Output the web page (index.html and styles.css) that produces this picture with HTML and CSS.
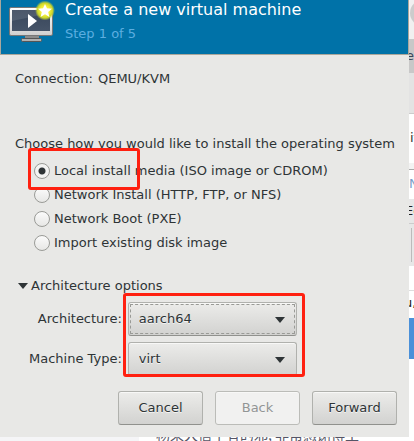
FILE: index.html
```html
<!DOCTYPE html>
<html lang="en">
<head>
<meta charset="utf-8">
<title>Create a new virtual machine</title>
<link rel="stylesheet" href="styles.css">
</head>
<body>
<main class="desktop">
  <form class="dialog">
    <header class="banner">
      <svg class="logo" viewBox="0 0 48 44" aria-hidden="true">
        <defs>
          <linearGradient id="screen" x1="0" y1="0" x2="0" y2="1"><stop offset="0" stop-color="#38465a"/><stop offset="1" stop-color="#465468"/></linearGradient>
          <linearGradient id="frame" x1="0" y1="0" x2="0" y2="1"><stop offset="0" stop-color="#fff"/><stop offset="1" stop-color="#cfcfcf"/></linearGradient>
          <radialGradient id="glow"><stop offset="0.45" stop-color="#f6f03a"/><stop offset="0.75" stop-color="#c9d52b"/><stop offset="1" stop-color="#c9d52b" stop-opacity="0"/></radialGradient>
        </defs>
        <path d="M18 34h14v5H18z" fill="#8c8c8c"/>
        <rect x="14.500" y="37.500" width="20" height="3" rx="1" fill="#b0b0b0" stroke="#555"/>
        <rect x="2.500" y="6.500" width="43" height="28" rx="1.500" fill="url(#frame)" stroke="#777"/>
        <rect x="5" y="9" width="38" height="21" fill="url(#screen)"/>
        <path d="M5 9h38v3L5 20z" fill="#fff" opacity=".1"/>
        <path d="M21 13l9 7-9 7z" fill="#fff"/>
        <circle cx="38" cy="9.500" r="10" fill="url(#glow)"/>
        <path d="M38 3l2 4.300 5 .4-3.800 3.300 1.200 5-4.400-2.700-4.400 2.700 1.200-5L31 7.700l5-.4z" fill="#fff"/>
      </svg>
      <div>
        <h1 class="title">Create a new virtual machine</h1>
        <p class="step">Step 1 of 5</p>
      </div>
    </header>
    <div class="content">
      <p class="connection"><span>Connection:</span><span>QEMU/KVM</span></p>
      <fieldset class="methods">
        <legend>Choose how you would like to install the operating system</legend>
        <div class="method marked">
          <input type="radio" name="method" id="local" checked>
          <label for="local">Local install media (ISO image or CDROM)</label>
        </div>
        <div class="method">
          <input type="radio" name="method" id="network">
          <label for="network">Network Install (HTTP, FTP, or NFS)</label>
        </div>
        <div class="method">
          <input type="radio" name="method" id="pxe">
          <label for="pxe">Network Boot (PXE)</label>
        </div>
        <div class="method">
          <input type="radio" name="method" id="import">
          <label for="import">Import existing disk image</label>
        </div>
      </fieldset>
      <details class="options" open>
        <summary><svg class="arrow" viewBox="0 0 10 6" aria-hidden="true"><path d="M0 0h10L5 6z"/></svg>Architecture options</summary>
        <div class="option-grid">
          <div class="labels">
            <label for="arch">Architecture:</label>
            <label for="machine">Machine Type:</label>
          </div>
          <div class="selects">
            <div class="select focused"><select id="arch"><option>aarch64</option></select><svg class="arrow" viewBox="0 0 10 6" aria-hidden="true"><path d="M0 0h10L5 6z"/></svg></div>
            <div class="select"><select id="machine"><option>virt</option></select><svg class="arrow" viewBox="0 0 10 6" aria-hidden="true"><path d="M0 0h10L5 6z"/></svg></div>
          </div>
        </div>
      </details>
      <footer class="actions">
        <button type="button">Cancel</button>
        <button type="button" disabled>Back</button>
        <button type="button">Forward</button>
      </footer>
    </div>
  </form>
  <aside class="behind">
    <div class="tabs"><span class="knob"></span></div>
    <div class="tab"><span>e</span></div>
    <div class="bar"></div>
    <div class="heading"><span>it</span></div>
    <div class="field"><span>N</span></div>
    <div class="tools"><span>Ed</span></div>
    <div class="tools rule"><i></i></div>
    <div class="row"></div>
    <div class="path"><span>u,</span></div>
    <div class="selected"></div>
  </aside>
  <div class="below"><p lang="zh">杨荣大信于有的邪, 非常感谢博主</p></div>
</main>
</body>
</html>
```

FILE: styles.css
```css
*, *::after { box-sizing: border-box; }
body {
  margin: 0;
  background: #fff;
  color: #2e3436;
  font: 13px/16px "DejaVu Sans", "Noto Sans CJK SC", sans-serif;
  overflow: hidden;
}
h1, p, fieldset, legend { margin: 0; padding: 0; border: 0; font-weight: normal; }
.desktop {
  display: grid;
  grid-template-columns: 1fr 5px;
  grid-template-rows: auto 4px;
}
.dialog { background: #e8e8e6; }
.banner {
  display: flex;
  gap: 10px;
  height: 55px;
  padding: 0 7px;
  background: #0072a8;
  border: solid #aaa79c;
  border-width: 0 1px 1px;
}
.logo { width: 48px; height: 44px; margin: 1px 0 0 -1px; flex: none; }
.title { color: #fff; font-size: 16px; line-height: 20px; }
.step { color: #5caee0; line-height: 16px; margin-top: 6px; }
.content { padding: 16px 12px 12px 15px; }
.connection { display: flex; gap: 5px; }
.methods { margin-top: 49px; min-width: 0; }
.methods legend { white-space: nowrap; margin-bottom: 7px; }
.method {
  display: flex;
  align-items: center;
  gap: 4px;
  height: 24px;
  padding-left: 19px;
  position: relative;
}
.method input {
  appearance: none;
  width: 16px;
  height: 16px;
  margin: 0;
  border: 1px solid #9a9b97;
  border-radius: 50%;
  background: linear-gradient(#fbfbfb, #e7e7e5);
}
.method input:checked { background: radial-gradient(circle, #2e3436 3px, #f3f3f2 4px); }
.marked::after {
  content: "";
  position: absolute;
  z-index: 1;
  left: 13px;
  top: -11px;
  width: 112px;
  height: 42px;
  border: 3px solid #ff2010;
  border-radius: 3px;
  pointer-events: none;
}
.options { margin-top: 23px; }
.options summary { display: flex; align-items: center; gap: 3px; padding-left: 3px; list-style: none; }
.arrow { width: 10px; height: 6px; fill: #2e3436; }
.option-grid { display: flex; align-items: flex-start; gap: 6px; margin-top: 7px; padding-left: 14px; }
.labels { display: grid; grid-auto-rows: 40px 34px; text-align: right; padding-top: 1px; }
.labels label { line-height: 34px; }
.selects { position: relative; display: grid; gap: 6px; padding-top: 1px; }
.selects::after {
  content: "";
  position: absolute;
  inset: -8px -8px -1px -5px;
  border: 3px solid #ff2010;
  border-radius: 3px;
  pointer-events: none;
}
.select { position: relative; display: grid; }
.select .arrow { position: absolute; right: 12px; top: 15px; pointer-events: none; }
select, button {
  appearance: none;
  height: 34px;
  font: inherit;
  color: inherit;
  border: 1px solid #b0b1ad;
  border-bottom-color: #90918d;
  border-radius: 3px;
  background: linear-gradient(#ececea, #d2d2d0);
  box-shadow: inset 0 1px #f8f8f7;
  text-shadow: 0 1px #f4f4f3;
}
select { width: 169px; padding: 0 10px; }
.focused select { outline: 1px dashed #999a96; outline-offset: -3px; }
.actions { display: flex; justify-content: flex-end; gap: 12px; margin-top: 15px; }
button { width: 85px; padding: 0; }
button:disabled { color: #929595; background: #f1f1f0; border-color: #bbbcb8; }
.behind {
  grid-column: 2;
  grid-row: 1 / 3;
  min-width: 0;
  overflow: hidden;
  background: #fff;
}
.behind > div { position: relative; overflow: hidden; }
.tabs { height: 39px; background: #f0f0f0; }
.knob { display: block; width: 26px; height: 26px; border-radius: 50%; background: #ccc; margin-left: 1px; }
.tab { height: 34px; padding-top: 9px; background: #c8c8c8; color: #3b4658; }
.tab span { margin-left: -3px; }
.bar { height: 41px; background: #e3e3e3; border-bottom: 1px solid #ccc; }
.heading { height: 49px; padding-top: 16px; }
.heading span { margin-left: 1px; }
.field { height: 36px; border-top: 6px solid #f3f3f3; box-shadow: inset 0 1px #aaa; padding-top: 7px; color: #7b9fc9; }
.tools { height: 25px; padding-top: 4px; background: #e7e7e7; border-bottom: 1px solid #ccc; color: #222; }
.tools span { margin-left: -4px; }
.rule { height: 42px; border: 0; }
.rule i { display: block; width: 1px; height: 34px; margin-left: 2px; background: #bbb; }
.row { height: 25px; border-bottom: 1px solid #ddd; }
.path { height: 27px; padding-top: 4px; color: #222; }
.path span { margin-left: -5px; }
.selected { height: 41px; background: #4a90d9; }
.below {
  grid-column: 1;
  grid-row: 2;
  overflow: hidden;
  padding-left: 156px;
  background: linear-gradient(90deg, #f5f5f7 139px, #fff 139px);
  color: #555566;
}
.below p { font: 14px/16px "Noto Sans CJK SC", sans-serif; white-space: nowrap; margin-top: -11px; }
```
